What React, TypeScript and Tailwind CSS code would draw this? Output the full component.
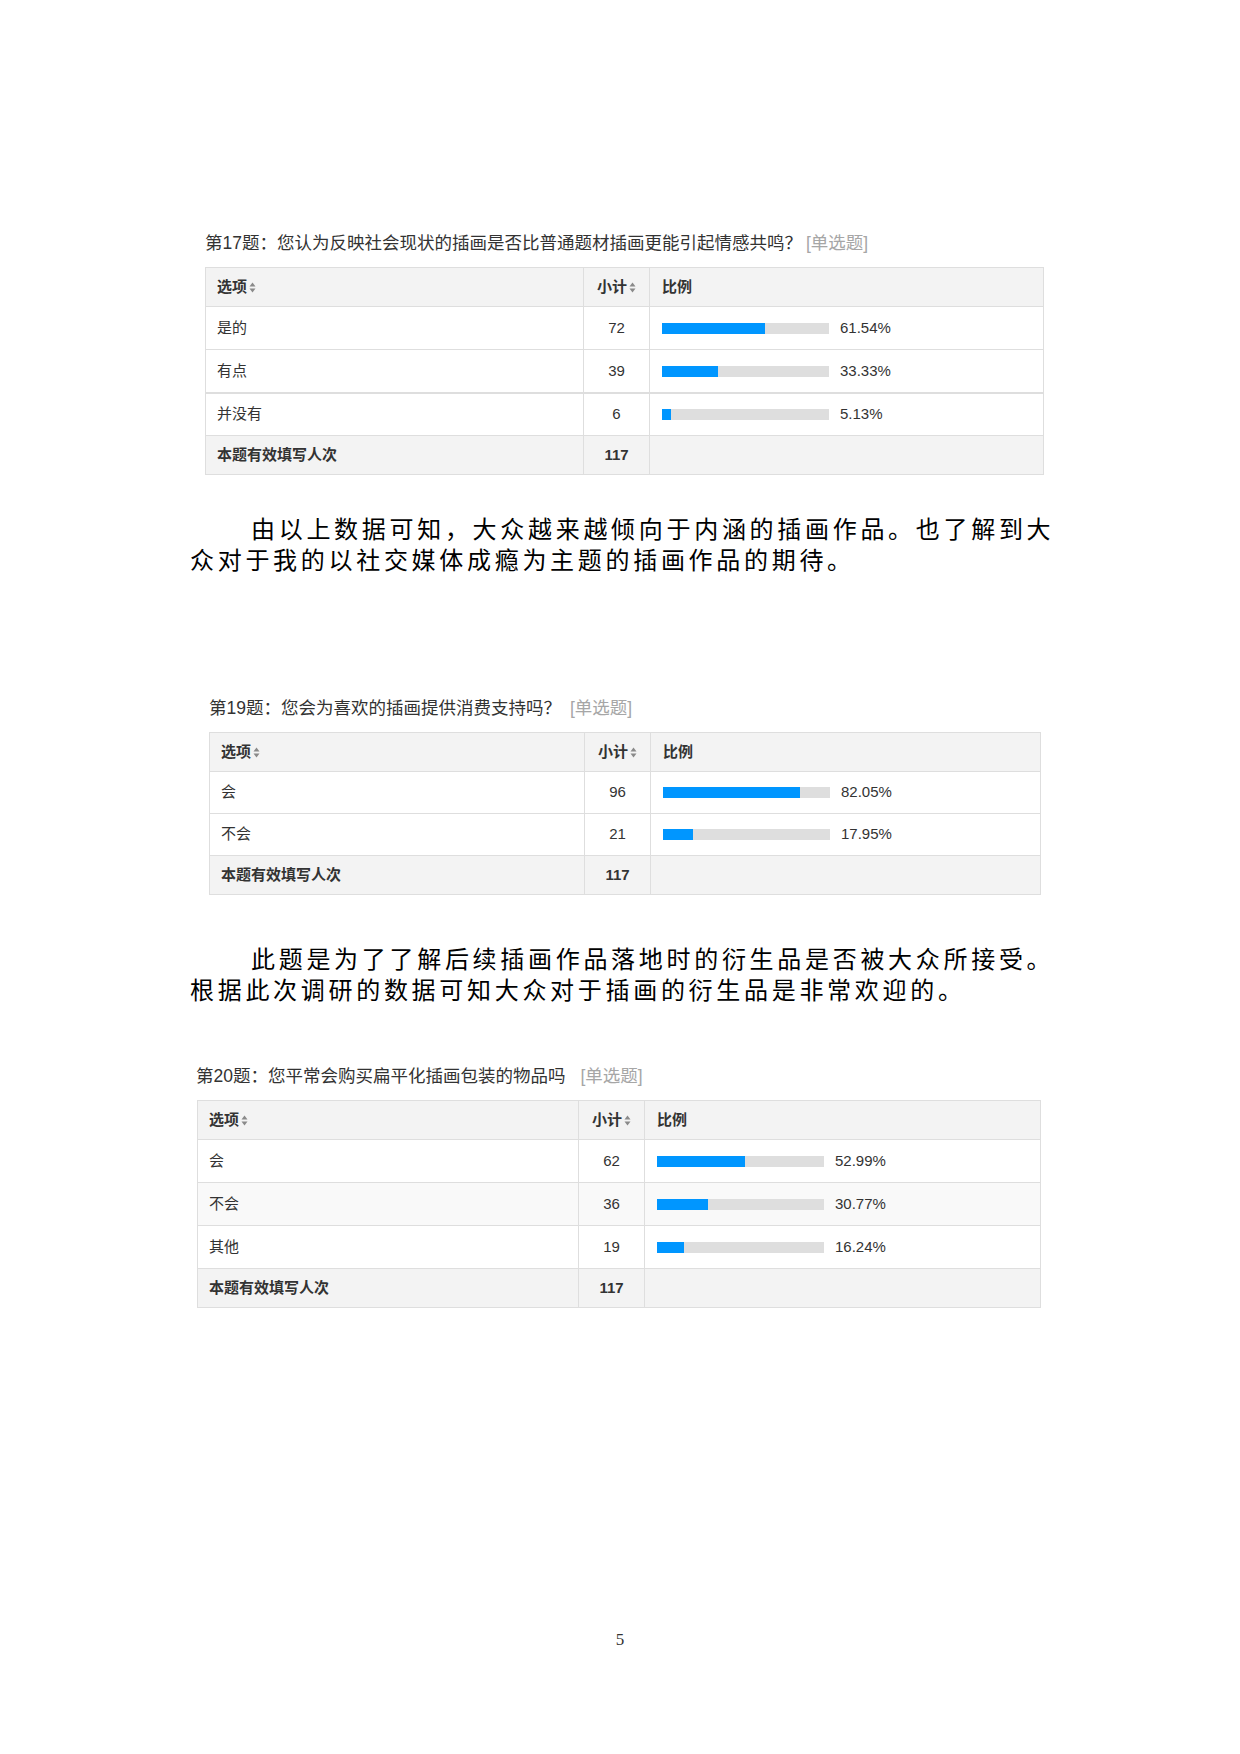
import React from 'react';

interface Row {
  label: string;
  count: number;
  pct: number;
  shade?: boolean;
  thickTop?: boolean;
}

interface SurveyTableProps {
  width: number;
  col1: number;
  col2: number;
  rows: Row[];
  total: number;
  rowClass?: string;
}

const sansFont = { fontFamily: '"Liberation Sans", "Noto Sans CJK SC", sans-serif' };

function SortArrows() {
  return (
    <svg width="7" height="11" viewBox="0 0 7 11" className="ml-[2px] inline-block">
      <path d="M3.5 0.5 L6.5 4.5 L0.5 4.5 Z" fill="#8a8a8a" />
      <path d="M3.5 10.5 L6.5 6.5 L0.5 6.5 Z" fill="#8a8a8a" />
    </svg>
  );
}

function SurveyTable({ width, col1, col2, rows, total, rowClass = 'h-[43px]' }: SurveyTableProps) {
  const cols = `${col1}px ${col2}px 1fr`;
  return (
    <div
      className="border border-[#dedede] text-[15px] text-[#333]"
      style={{ width, ...sansFont }}
    >
      {/* header */}
      <div className="grid h-[38px] bg-[#f3f3f3] font-bold" style={{ gridTemplateColumns: cols }}>
        <div className="flex items-center pl-[11px]">
          选项
          <SortArrows />
        </div>
        <div className="flex items-center justify-center border-l border-[#dedede]">
          小计
          <SortArrows />
        </div>
        <div className="flex items-center border-l border-[#dedede] pl-[12px]">比例</div>
      </div>

      {rows.map((r) => (
        <div
          key={r.label}
          className={`grid ${rowClass} border-t ${r.thickTop ? 'border-t-2' : ''} border-[#dedede] ${
            r.shade ? 'bg-[#f9f9f9]' : 'bg-white'
          }`}
          style={{ gridTemplateColumns: cols }}
        >
          <div className="flex items-center pl-[11px]">{r.label}</div>
          <div className="flex items-center justify-center border-l border-[#dedede]">{r.count}</div>
          <div className="flex items-center border-l border-[#dedede] pl-[12px]">
            <div className="h-[11px] w-[167px] bg-[#dedede]">
              <div className="h-full bg-[#0096ff]" style={{ width: `${r.pct}%` }} />
            </div>
            <span className="ml-[11px]">{r.pct.toFixed(2)}%</span>
          </div>
        </div>
      ))}

      {/* footer */}
      <div
        className="grid h-[39px] border-t border-[#dedede] bg-[#f3f3f3] font-bold"
        style={{ gridTemplateColumns: cols }}
      >
        <div className="flex items-center pl-[11px]">本题有效填写人次</div>
        <div className="flex items-center justify-center border-l border-[#dedede]">{total}</div>
        <div className="border-l border-[#dedede]" />
      </div>
    </div>
  );
}

function Title({ no, text, gap }: { no: number; text: string; gap: string }) {
  return (
    <div className="whitespace-nowrap text-[17.5px] leading-[24px] text-[#333]" style={sansFont}>
      第{no}题：{text}
      <span className={gap} />
      <span className="text-[#a6a6a6]">[单选题]</span>
    </div>
  );
}

function Para({ children }: { children: React.ReactNode }) {
  return (
    <p
      className="w-[880px] text-[24px] leading-[31px] tracking-[3.7px] text-black indent-[61px]"
      style={{ fontFamily: '"Liberation Serif", "Noto Sans CJK SC", serif' }}
    >
      {children}
    </p>
  );
}

export default function App() {
  return (
    <div className="relative flex h-[1754px] w-[1240px] flex-col bg-white pt-[231px]">
      <div className="ml-[205px]">
        <Title no={17} text="您认为反映社会现状的插画是否比普通题材插画更能引起情感共鸣？" gap="inline-block w-[4px]" />
      </div>
      <div className="ml-[205px] mt-[12px]">
        <SurveyTable
          width={839}
          col1={377}
          col2={66}
          total={117}
          rows={[
            { label: '是的', count: 72, pct: 61.54 },
            { label: '有点', count: 39, pct: 33.33 },
            { label: '并没有', count: 6, pct: 5.13, thickTop: true },
          ]}
        />
      </div>

      <div className="ml-[190px] mt-[40px]">
        <Para>由以上数据可知，大众越来越倾向于内涵的插画作品。也了解到大众对于我的以社交媒体成瘾为主题的插画作品的期待。</Para>
      </div>

      <div className="ml-[209px] mt-[119px]">
        <Title no={19} text="您会为喜欢的插画提供消费支持吗？" gap="inline-block w-[9px]" />
      </div>
      <div className="ml-[209px] mt-[12px]">
        <SurveyTable
          width={832}
          col1={374}
          col2={66}
          total={117}
          rowClass="h-[42px]"
          rows={[
            { label: '会', count: 96, pct: 82.05 },
            { label: '不会', count: 21, pct: 17.95 },
          ]}
        />
      </div>

      <div className="ml-[190px] mt-[50px]">
        <Para>此题是为了了解后续插画作品落地时的衍生品是否被大众所接受。根据此次调研的数据可知大众对于插画的衍生品是非常欢迎的。</Para>
      </div>

      <div className="ml-[196px] mt-[57px]">
        <Title no={20} text="您平常会购买扁平化插画包装的物品吗" gap="inline-block w-[15px]" />
      </div>
      <div className="ml-[197px] mt-[12px]">
        <SurveyTable
          width={844}
          col1={380}
          col2={66}
          total={117}
          rows={[
            { label: '会', count: 62, pct: 52.99 },
            { label: '不会', count: 36, pct: 30.77, shade: true },
            { label: '其他', count: 19, pct: 16.24 },
          ]}
        />
      </div>

      <div
        className="mt-[320px] text-center text-[17px] leading-[24px] text-[#333]"
        style={{ fontFamily: '"Liberation Serif", serif' }}
      >
        5
      </div>
    </div>
  );
}
